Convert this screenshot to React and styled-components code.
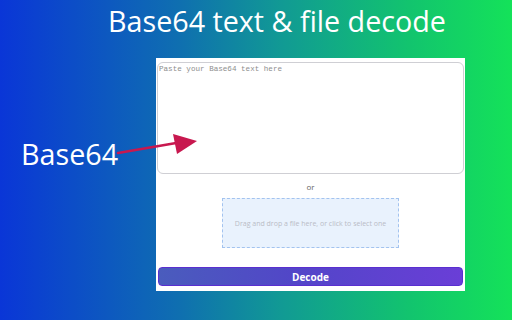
import React from 'react';
import styled, { createGlobalStyle } from 'styled-components';

// GLOBAL //

const GlobalStyle = createGlobalStyle`
  html, body {
    margin: 0;
    padding: 0;
  }
  * {
    box-sizing: border-box;
  }
`;

// COMPONENT //

export default function App() {
  return (
    <>
      <GlobalStyle />
      <Page>
        <Title>Base64 text &amp; file decode</Title>
        <Main>
          <LabelColumn>
            <Label>Base64</Label>
          </LabelColumn>
          <Panel>
            <TextInput placeholder="Paste your Base64 text here" />
            <OrText>or</OrText>
            <DropZone>Drag and drop a file here, or click to select one</DropZone>
            <DecodeButton>Decode</DecodeButton>
          </Panel>
        </Main>
        <Arrow viewBox="0 0 512 320" width="512" height="320">
          <line x1="118" y1="153" x2="182" y2="142" stroke="#c8184f" strokeWidth="2.6" strokeLinecap="round" />
          <polygon points="173,134 197,141 177,154" fill="#c8184f" />
        </Arrow>
      </Page>
    </>
  );
}

// STYLING //

const Page = styled.div`
  position: relative;
  width: 512px;
  height: 320px;
  overflow: hidden;
  background: linear-gradient(90deg, #0a36d7 0%, #0f6fb0 35%, #119a94 55%, #12c46e 80%, #14e259 100%);
  font-family: "Open Sans", "DejaVu Sans", sans-serif;
`;

const Title = styled.h1`
  margin: 0;
  padding: 2px 0 0 108px;
  height: 58px;
  color: #ffffff;
  font-weight: 400;
  font-size: 28.7px;
  line-height: 38px;
`;

const Main = styled.div`
  display: flex;
`;

const LabelColumn = styled.div`
  width: 156px;
  padding: 77px 0 0 21px;
`;

const Label = styled.div`
  color: #ffffff;
  font-size: 28.7px;
  line-height: 38px;
`;

const Panel = styled.div`
  width: 309px;
  height: 233px;
  background: #ffffff;
  padding: 4px 1px 5px 1px;
  display: flex;
  flex-direction: column;
  align-items: center;
`;

const TextInput = styled.textarea`
  width: 100%;
  height: 114px;
  border: 1px solid #cfcfd4;
  border-radius: 6px;
  padding: 1px 1px;
  resize: none;
  outline: none;
  font-family: "Liberation Mono", monospace;
  font-size: 7.6px;
  line-height: 10px;
  color: #333;

  &::placeholder {
    color: #8e8e8e;
  }
`;

const OrText = styled.div`
  margin-top: 7px;
  height: 16px;
  color: #666;
  font-size: 8px;
  line-height: 12px;
`;

const DropZone = styled.div`
  width: 177px;
  height: 51px;
  margin-top: 2px;
  background: #e9f2fd;
  border: 1px dashed #a3c3ef;
  display: flex;
  align-items: center;
  justify-content: center;
  color: #b9bcc6;
  font-size: 7px;
`;

const DecodeButton = styled.button`
  margin-top: 19px;
  width: 305px;
  height: 19px;
  border: 1px solid #5a2fd0;
  border-radius: 4px;
  background: linear-gradient(90deg, #4a5cbd 0%, #5246c8 45%, #6a3ed7 100%);
  color: #ffffff;
  font-family: "Open Sans", sans-serif;
  font-weight: 700;
  font-size: 10px;
  padding: 0;
`;

const Arrow = styled.svg`
  position: absolute;
  left: 0;
  top: 0;
  pointer-events: none;
`;
